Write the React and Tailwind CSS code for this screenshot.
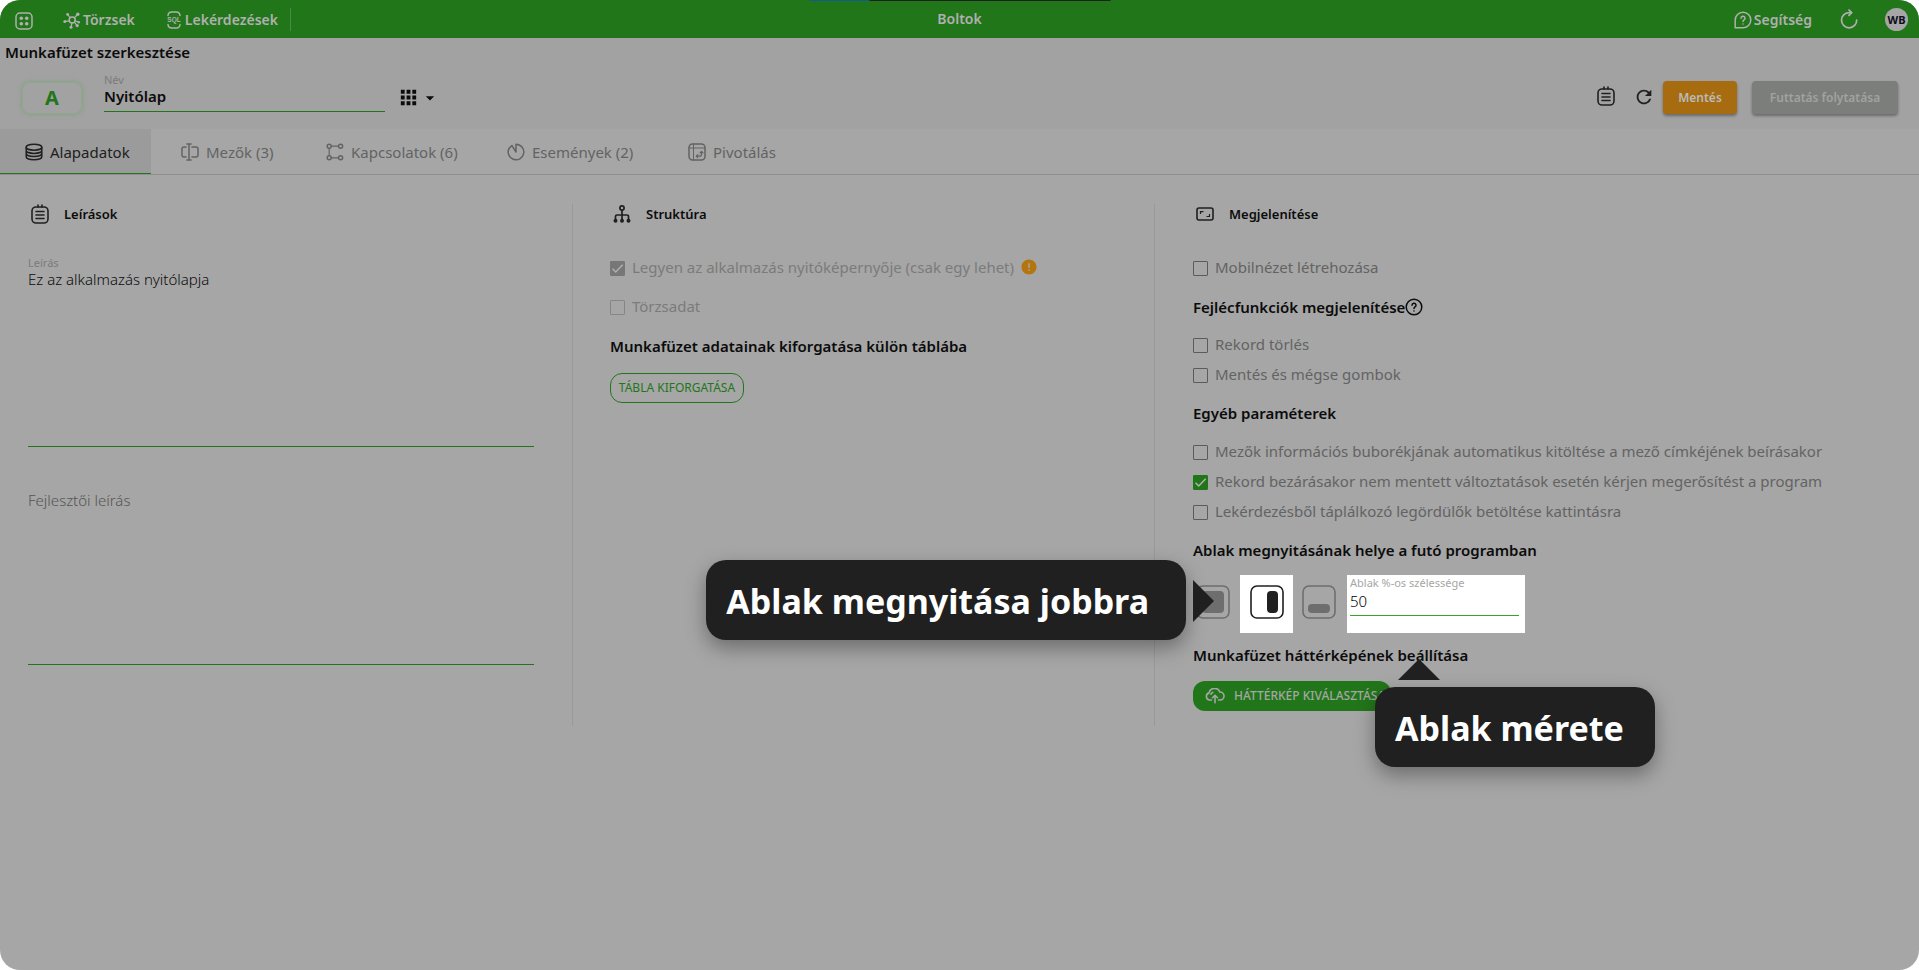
import { useState } from 'react';
import { MdApps, MdArrowDropDown, MdRefresh, MdError } from 'react-icons/md';

const TABS = [
  { id: 'base', label: 'Alapadatok', icon: DatabaseIcon, width: 'w-[156px]' },
  { id: 'fields', label: 'Mezők (3)', icon: FieldsIcon, width: 'w-[145px]' },
  { id: 'links', label: 'Kapcsolatok (6)', icon: LinksIcon, width: 'w-[181px]' },
  { id: 'events', label: 'Események (2)', icon: EventsIcon, width: 'w-[181px]' },
  { id: 'pivot', label: 'Pivotálás', icon: PivotIcon, width: 'w-[150px]' },
];

/* ---------- icons ---------- */

function Svg({ size = 18, box = 18, className = '', children }) {
  return (
    <svg width={size} height={size} viewBox={`0 0 ${box} ${box}`} fill="none" stroke="currentColor" strokeWidth="1.5" strokeLinecap="round" strokeLinejoin="round" className={`shrink-0 ${className}`} aria-hidden="true">
      {children}
    </svg>
  );
}

function MenuIcon() {
  return (
    <Svg>
      <rect x="1" y="1" width="16" height="16" rx="4" />
      <g fill="currentColor" stroke="none">
        <circle cx="6.3" cy="6.3" r="1.8" />
        <circle cx="11.7" cy="6.3" r="1.8" />
        <circle cx="6.3" cy="11.7" r="1.8" />
        <circle cx="11.7" cy="11.7" r="1.8" />
      </g>
    </Svg>
  );
}

function MasterDataIcon() {
  return (
    <Svg>
      <circle cx="9.2" cy="9" r="3" />
      <path strokeWidth="1.2" d="M7.2 6.8 5 4M11.3 6.8 14 4M12.2 9.8l3 1.2M6.2 9.8l-3.6.6M9 12l-.8 3.4M11.4 11.2l2.2 2.6" />
      <g fill="currentColor" stroke="none">
        <circle cx="4.6" cy="3.4" r="1.4" />
        <circle cx="14.8" cy="3.2" r="1.7" />
        <circle cx="1.8" cy="10.6" r="1.5" />
        <circle cx="15.8" cy="11.2" r="1.2" />
        <circle cx="8" cy="16.2" r="1.5" />
        <circle cx="14.2" cy="14.6" r="1.6" />
      </g>
    </Svg>
  );
}

function SqlIcon() {
  return (
    <svg width="14" height="18" viewBox="0 0 14 18" fill="none" stroke="currentColor" strokeWidth="1.5" strokeLinecap="round" className="shrink-0" aria-hidden="true">
      <path d="M1 4.5A3.5 3.5 0 0 1 4.5 1h5A3.5 3.5 0 0 1 13 4.5M1 13.5A3.5 3.5 0 0 0 4.5 17h5a3.5 3.5 0 0 0 3.5-3.5" />
      <text x="7" y="11.3" textAnchor="middle" fill="currentColor" stroke="none" fontFamily="Liberation Sans, sans-serif" fontWeight="700" fontSize="6.5">SQL</text>
    </svg>
  );
}

function HelpBubbleIcon() {
  return (
    <Svg>
      <path d="M9 1.2a7.6 7.6 0 1 1 0 15.6H1.2V9A7.8 7.8 0 0 1 9 1.2z" />
      <path d="M7 7.2a2 2 0 1 1 3 1.7c-.7.4-1 .8-1 1.5M9 12.9v.1" />
    </Svg>
  );
}

function ReloadIcon() {
  return (
    <Svg size={20} box={20}>
      <path strokeWidth="1.7" d="M12.5 3.6H10A7.6 7.6 0 1 0 17.7 11" />
      <path strokeWidth="1.7" d="m10 1 2.6 2.6L10 6.4" />
    </Svg>
  );
}

function NoteIcon() {
  return (
    <svg width="18" height="20" viewBox="0 0 18 20" fill="none" stroke="currentColor" strokeWidth="1.6" strokeLinecap="round" className="shrink-0" aria-hidden="true">
      <rect x="1" y="3" width="16" height="16" rx="4" />
      <path d="M7 1v2M11 1v2M5 7.5h8M5 11h8M5 14.5h8" />
    </svg>
  );
}

function DatabaseIcon() {
  return (
    <Svg>
      <ellipse cx="9" cy="4.2" rx="7.8" ry="3" />
      <path d="M1.2 4.2v9.6c0 1.7 3.5 3 7.8 3s7.8-1.3 7.8-3V4.2M1.2 7.4c0 1.7 3.5 3 7.8 3s7.8-1.3 7.8-3M1.2 10.6c0 1.7 3.5 3 7.8 3s7.8-1.3 7.8-3" />
    </Svg>
  );
}

function FieldsIcon() {
  return (
    <Svg>
      <path d="M8 1v16M6 1h4M6 17h4M5 4H3a2 2 0 0 0-2 2v6a2 2 0 0 0 2 2h2M11 4h4a2 2 0 0 1 2 2v6a2 2 0 0 1-2 2h-4" />
    </Svg>
  );
}

function LinksIcon() {
  return (
    <Svg>
      <circle cx="3.2" cy="3.2" r="2" />
      <circle cx="14.6" cy="3.2" r="2" />
      <circle cx="3.2" cy="14.8" r="2" />
      <circle cx="14.6" cy="14.8" r="2" />
      <path strokeWidth="1.2" d="M5.5 3.2h6.8M5.5 14.8h6.8M3.2 5.5v7" />
    </Svg>
  );
}

function EventsIcon() {
  return (
    <Svg>
      <path d="M9 1.2A7.8 7.8 0 1 1 2.3 5L5 2.6 9 9z" />
    </Svg>
  );
}

function PivotIcon() {
  return (
    <Svg>
      <rect x="1" y="1" width="16" height="16" rx="3.5" />
      <path d="M1 5h16M5.5 1v16" strokeWidth="1" />
      <path d="M8.5 13.2h3a2 2 0 0 0 2-2V8.5M12 9.8l1.5-1.5L15 9.8M9.7 11.7l-1.5 1.5 1.5 1.5" strokeWidth="1.2" />
    </Svg>
  );
}

function StructureIcon() {
  return (
    <Svg>
      <circle cx="9" cy="3" r="2.1" strokeWidth="1.7" />
      <path d="M9 5.5V14M2.5 14v-2.5A1.5 1.5 0 0 1 4 10h10a1.5 1.5 0 0 1 1.5 1.5V14" strokeWidth="1.7" />
      <g fill="currentColor" stroke="none">
        <circle cx="2.5" cy="15.7" r="2" />
        <circle cx="9" cy="15.7" r="2" />
        <circle cx="15.5" cy="15.7" r="2" />
      </g>
    </Svg>
  );
}

function DisplayIcon() {
  return (
    <svg width="18" height="14" viewBox="0 0 18 14" fill="none" stroke="currentColor" strokeWidth="1.6" className="shrink-0" aria-hidden="true">
      <rect x="1" y="1" width="16" height="12" rx="2" />
      <path d="M4.5 7V4.7h3M13.5 7v2.5h-3" strokeWidth="1.2" />
    </svg>
  );
}

function HelpCircleIcon() {
  return (
    <Svg>
      <circle cx="9" cy="9" r="7.8" />
      <path d="M7 7.2a2 2 0 1 1 3 1.7c-.7.4-1 .8-1 1.5M9 12.9v.1" />
    </Svg>
  );
}

function CloudIcon() {
  return (
    <svg width="20" height="16" viewBox="0 0 20 16" fill="none" stroke="currentColor" strokeWidth="1.6" strokeLinecap="round" strokeLinejoin="round" className="shrink-0" aria-hidden="true">
      <path d="M6.5 12H4.8a3.6 3.6 0 0 1-.6-7.1A5.5 5.5 0 0 1 14.8 4a4 4 0 0 1 .4 8h-1.7" />
      <path d="M10 14.8V7.5M7.5 9.7 10 7.2l2.5 2.5M6 6.2c.3-.9.9-1.5 1.7-1.8" />
    </svg>
  );
}

function WindowIcon({ placement }) {
  const pane = {
    center: { x: 6, y: 6, width: 22, height: 22 },
    right: { x: 17, y: 6, width: 11, height: 22 },
    bottom: { x: 6, y: 19, width: 22, height: 9 },
  }[placement];
  return (
    <svg width="34" height="34" viewBox="0 0 34 34" className="shrink-0" aria-hidden="true">
      <rect x="1" y="1" width="32" height="32" rx="6" fill="none" stroke="currentColor" strokeWidth="1.6" />
      <rect {...pane} rx="4" fill="currentColor" />
    </svg>
  );
}

/* ---------- form pieces ---------- */

function Check({ label, defaultChecked = false, disabled = false, children }) {
  const box = disabled
    ? 'border-[#868686] checked:bg-[#777777] checked:border-[#777777]'
    : 'border-[#5b5b5b] checked:bg-[#22761a] checked:border-[#22761a]';
  return (
    <div className="flex h-5 items-center">
      <label className={`flex items-center gap-[7px] ${disabled ? 'text-[#7b7b7b]' : 'text-[#636363]'}`}>
        <span className="grid">
          <input type="checkbox" defaultChecked={defaultChecked} disabled={disabled} className={`peer col-start-1 row-start-1 size-[15px] appearance-none rounded-[1px] border ${box}`} />
          <svg viewBox="0 0 15 15" className="pointer-events-none invisible col-start-1 row-start-1 size-[15px] text-[#b0b0b0] peer-checked:visible" fill="none" stroke="currentColor" strokeWidth="1.5" aria-hidden="true">
            <path d="m2.5 7.8 3.2 3.2 7-7.2" />
          </svg>
        </span>
        <span className="pb-[2px]">{label}</span>
      </label>
      {children}
    </div>
  );
}

function SectionTitle({ icon, children }) {
  return (
    <h2 className="flex h-5 items-center text-[13px] font-semibold text-[#0c0c0c]">
      <span className="flex w-9 items-center pl-[3px] text-[#202020]">{icon}</span>
      {children}
    </h2>
  );
}

function Tooltip({ className, children }) {
  return (
    <div role="tooltip" className={`absolute z-10 flex h-20 items-center rounded-[20px] bg-[#202020] pt-[2px] pl-[20px] text-[34px] font-bold whitespace-nowrap text-white shadow-[0_8px_20px_rgba(0,0,0,0.35)] ${className}`}>
      {children}
    </div>
  );
}

/* ---------- page parts ---------- */

function TopBar() {
  return (
    <header className="relative flex h-[38px] items-center bg-[#22761a] pr-[11px] pl-[15px] text-[14px] font-semibold text-[#b0b0b0]">
      <div className="absolute top-0 left-1/2 flex h-px w-[301px] -translate-x-1/2">
        <span className="w-[60px] bg-[#0f5c96]" />
        <span className="flex-1 bg-[#202020]" />
      </div>
      <button aria-label="Menü" className="pt-1"><MenuIcon /></button>
      <a href="#torzsek" className="ml-[30px] flex items-center gap-[2px] pt-[2px]"><MasterDataIcon />Törzsek</a>
      <a href="#lekerdezesek" className="ml-8 flex items-center gap-1 pt-[2px]"><SqlIcon />Lekérdezések</a>
      <span className="ml-3 h-[23px] w-px bg-[#4d8a47]" />
      <h1 className="absolute left-1/2 -translate-x-1/2">Boltok</h1>
      <a href="#segitseg" className="ml-auto flex items-center gap-[2px] pt-[2px]"><HelpBubbleIcon />Segítség</a>
      <button aria-label="Újratöltés" className="ml-[27px]"><ReloadIcon /></button>
      <button className="ml-[26px] size-[23px] rounded-full bg-[#a6a6a6] text-[11px] leading-[23px] font-bold text-[#0c0c1c]">WB</button>
    </header>
  );
}

function WorkbookHeader() {
  return (
    <section className="bg-[#a2a2a2] pb-[2px]">
      <h2 className="flex h-[30px] items-center pb-[2px] pl-[5px] font-semibold text-[#0c0c0c]">Munkafüzet szerkesztése</h2>
      <div className="flex h-[59px] items-center pr-[21px] pl-[22px]">
        <div className="flex h-8 w-[60px] items-center justify-center rounded-lg border border-[#8fa78d] text-[20px] font-bold text-[#22761a] shadow-[0_0_5px_#7d9f7a]">A</div>
        <div className="ml-[22px] w-[281px] pb-[10px]">
          <label htmlFor="name" className="block text-[11px] leading-[14px] text-[#7b7b7b]">Név</label>
          <input id="name" defaultValue="Nyitólap" className="block h-[25px] w-full border-b border-[#22761a] bg-transparent pb-[6px] font-semibold text-[#0c0c0c] outline-none" />
        </div>
        <button aria-label="Ikon választása" className="ml-3 flex items-center text-[#0c0c0c]">
          <MdApps size={23} />
          <MdArrowDropDown size={20} />
        </button>
        <div className="ml-auto flex items-center text-[#202020]">
          <button aria-label="Jegyzet" className="mr-[18px] pb-1"><NoteIcon /></button>
          <button aria-label="Frissítés" className="mr-2 pb-[2px]"><MdRefresh size={22} /></button>
          <button className="h-[33px] w-[74px] rounded-[4px] bg-[#a66c0f] text-[12px] font-semibold text-[#bababa] shadow-[0_2px_3px_rgba(0,0,0,0.35)]">Mentés</button>
          <button disabled className="ml-[15px] h-[33px] w-[146px] rounded-[4px] bg-[#7b7e7a] text-[12px] font-semibold text-[#a2a2a2] shadow-[0_2px_3px_rgba(0,0,0,0.35)]">Futtatás folytatása</button>
        </div>
      </div>
    </section>
  );
}

function Tabs() {
  const [active, setActive] = useState('base');
  return (
    <nav role="tablist" className="flex h-[46px] border-b border-[#8f8f8f]">
      {TABS.map(({ id, label, icon: Icon, width }) => (
        <div key={id} className={width}>
          <button
            role="tab"
            aria-selected={active === id}
            onClick={() => setActive(id)}
            className={`flex h-full items-center gap-[7px] border-b pt-[1px] pl-[25px] whitespace-nowrap ${active === id ? 'w-[151px] border-[#22761a] bg-[#9b9b9b] text-[#202020]' : 'border-transparent text-[#636363]'}`}
          >
            <Icon />
            {label}
          </button>
        </div>
      ))}
    </nav>
  );
}

function Descriptions() {
  return (
    <section className="pr-[38px] pl-[28px]">
      <SectionTitle icon={<NoteIcon />}>Leírások</SectionTitle>
      <label htmlFor="desc" className="mt-8 block text-[11px] leading-[14px] text-[#7b7b7b]">Leírás</label>
      <textarea id="desc" defaultValue="Ez az alkalmazás nyitólapja" className="block h-[177px] w-full resize-none border-b border-[#22761a] leading-[18px] font-light text-[#0c0c0c] outline-none" />
      <textarea aria-label="Fejlesztői leírás" placeholder="Fejlesztői leírás" className="mt-11 block h-[174px] w-full resize-none border-b border-[#22761a] leading-[18px] font-light outline-none placeholder:text-[#555555]" />
    </section>
  );
}

function Structure() {
  return (
    <section className="border-l border-[#999999] px-[37px]">
      <SectionTitle icon={<StructureIcon />}>Struktúra</SectionTitle>
      <div className="mt-[34px] flex flex-col gap-[19px]">
        <Check label="Legyen az alkalmazás nyitóképernyője (csak egy lehet)" defaultChecked disabled>
          <MdError size={18} className="mb-[2px] ml-[6px] text-[#b4750f]" />
        </Check>
        <Check label="Törzsadat" disabled />
      </div>
      <h3 className="mt-[19px] font-semibold text-[#0c0c0c]">Munkafüzet adatainak kiforgatása külön táblába</h3>
      <button className="mt-[17px] h-[30px] w-[134px] rounded-[12px] border border-[#22761a] text-[12px] whitespace-nowrap text-[#22761a]">TÁBLA KIFORGATÁSA</button>
    </section>
  );
}

function Appearance() {
  return (
    <section className="border-l border-[#999999] pl-[38px]">
      <SectionTitle icon={<DisplayIcon />}>Megjelenítése</SectionTitle>
      <div className="mt-[34px]">
        <Check label="Mobilnézet létrehozása" />
      </div>
      <h3 className="mt-[19px] flex items-center font-semibold text-[#0c0c0c]">Fejlécfunkciók megjelenítése<HelpCircleIcon /></h3>
      <div className="mt-[18px] flex flex-col gap-[10px]">
        <Check label="Rekord törlés" />
        <Check label="Mentés és mégse gombok" />
      </div>
      <h3 className="mt-[18px] font-semibold text-[#0c0c0c]">Egyéb paraméterek</h3>
      <div className="mt-[19px] flex flex-col gap-[10px]">
        <Check label="Mezők információs buborékjának automatikus kitöltése a mező címkéjének beírásakor" />
        <Check label="Rekord bezárásakor nem mentett változtatások esetén kérjen megerősítést a program" defaultChecked />
        <Check label="Lekérdezésből táplálkozó legördülők betöltése kattintásra" />
      </div>
      <h3 className="mt-[18px] font-semibold text-[#0c0c0c]">Ablak megnyitásának helye a futó programban</h3>
      <div className="mt-[15px] flex h-[58px]">
        <button aria-label="Középre" className="pr-[10px] pb-1 pl-[3px] text-[#6e6e6e]"><WindowIcon placement="center" /></button>
        <div className="relative flex">
          <button aria-label="Jobbra" className="w-[53px] bg-white pb-1 pl-[10px] text-[#202020]"><WindowIcon placement="right" /></button>
          <Tooltip className="-top-[15px] right-[107px] pr-[37px]">
            Ablak megnyitása jobbra
            <span className="absolute top-5 left-[calc(100%+7px)] border-y-[21px] border-l-[21px] border-y-transparent border-l-[#202020]" />
          </Tooltip>
        </div>
        <button aria-label="Alulra" className="pr-[11px] pb-1 pl-[9px] text-[#6e6e6e]"><WindowIcon placement="bottom" /></button>
        <div className="relative w-[178px] bg-white pt-[1px] pr-[6px] pl-[3px]">
          <label htmlFor="width" className="block text-[11px] leading-[14px] whitespace-nowrap text-[#a6a6a6]">Ablak %-os szélessége</label>
          <input id="width" defaultValue="50" className="block h-[26px] w-full border-b border-[#33a628] pb-1 font-light text-black outline-none" />
          <Tooltip className="top-28 left-[28px] pr-[31px]">
            Ablak mérete
            <span className="absolute bottom-[calc(100%+7px)] left-[23px] border-x-[21px] border-b-[21px] border-x-transparent border-b-[#202020]" />
          </Tooltip>
        </div>
      </div>
      <h3 className="mt-3 font-semibold text-[#0c0c0c]">Munkafüzet háttérképének beállítása</h3>
      <button className="mt-4 flex h-[30px] w-[198px] items-center gap-[9px] rounded-[12px] bg-[#22761a] pl-3 text-[12px] font-medium whitespace-nowrap text-[#a6a6a6]">
        <CloudIcon />
        HÁTTÉRKÉP KIVÁLASZTÁSA
      </button>
    </section>
  );
}

export default function App() {
  return (
    <div className="min-h-screen overflow-hidden rounded-[20px] bg-[#a6a6a6] font-['Noto_Sans',sans-serif] text-[15px] leading-5">
      <TopBar />
      <WorkbookHeader />
      <Tabs />
      <main className="mt-[29px] grid min-h-[522px] grid-cols-[572fr_582fr_765fr]">
        <Descriptions />
        <Structure />
        <Appearance />
      </main>
    </div>
  );
}
